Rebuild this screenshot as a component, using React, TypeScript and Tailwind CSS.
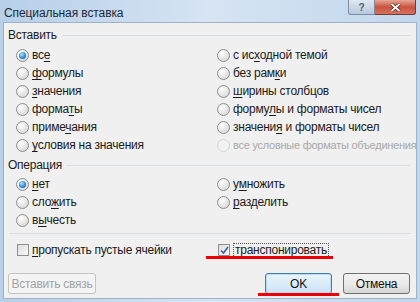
import React from "react";

// accelerator letter is marked with "&"
function Label({ text, disabled }: { text: string; disabled?: boolean }) {
  const i = text.indexOf("&");
  const color = disabled ? "text-[#a8a8a8] text-[11px]" : "text-[#1b1b1b]";
  if (i < 0) return <span className={`${color} whitespace-nowrap`}>{text}</span>;
  return (
    <span className={`${color} whitespace-nowrap`}>
      {text.slice(0, i)}
      <span className="underline underline-offset-[2px] decoration-[1px]">{text[i + 1]}</span>
      {text.slice(i + 2)}
    </span>
  );
}

function Radio({ checked, disabled }: { checked?: boolean; disabled?: boolean }) {
  return (
    <span
      className={`w-[13px] h-[13px] rounded-full border flex items-center justify-center shrink-0 ${
        disabled
          ? "border-[#d4d4d4] bg-[#f2f2f2]"
          : "border-[#8e8f8f] bg-[radial-gradient(circle_at_35%_30%,#ffffff,#e2e2e2_60%,#cfcfcf)]"
      }`}
    >
      {checked && (
        <span className="w-[7px] h-[7px] rounded-full bg-[radial-gradient(circle_at_40%_35%,#b8e6ff,#2f8ad8_55%,#0f4f94)]" />
      )}
    </span>
  );
}

function Check({ checked }: { checked?: boolean }) {
  return (
    <span className="w-[12px] h-[12px] border border-[#8e8f8f] bg-gradient-to-br from-[#dcdcdc] to-[#fbfbfb] flex items-center justify-center shrink-0">
      {checked && (
        <svg width="9" height="9" viewBox="0 0 9 9">
          <path d="M1 4.5 L3.5 7 L8 1" fill="none" stroke="#3a5f9e" strokeWidth="1.6" />
        </svg>
      )}
    </span>
  );
}

function Row({ children }: { children: React.ReactNode }) {
  return <div className="h-[18px] flex items-center gap-[3px]">{children}</div>;
}

function GroupHead({ title }: { title: string }) {
  return (
    <div className="h-[18px] flex items-center pl-[4px] pr-[6px] gap-[5px]">
      <span className="text-[#1b1b1b]">{title}</span>
      <span className="flex-1 h-px bg-[#d8dde3]" />
    </div>
  );
}

const pasteLeft = [
  { t: "вс&е", c: true },
  { t: "&формулы" },
  { t: "&значения" },
  { t: "форма&ты" },
  { t: "приме&чания" },
  { t: "&условия на значения" },
];
const pasteRight = [
  { t: "с ис&ходной темой" },
  { t: "без рам&ки" },
  { t: "&ширины столбцов" },
  { t: "форму&лы и форматы чисел" },
  { t: "значени&я и форматы чисел" },
  { t: "все условные форматы объединения", d: true },
];

export default function App() {
  return (
    <div
      className="w-[420px] h-[302px] bg-gradient-to-r from-[#b7cfe9] via-[#d6e4f3] to-[#c2d6ec] flex flex-col text-[12px] tracking-[-0.25px] relative overflow-hidden"
      style={{ fontFamily: '"Liberation Sans", Arial, sans-serif' }}
    >
      {/* title bar */}
      <div className="h-[22px] flex items-start justify-between pr-[4px]">
        <span className="pl-[4px] pt-[4px] text-[12px] tracking-[-0.1px] text-[#1e2a36]">Специальная вставка</span>
        <div className="flex">
          <span className="w-[27px] h-[15px] rounded-bl-[3px] border border-t-0 border-[#7d8ca0] bg-gradient-to-b from-[#dfe8f2] to-[#b8c9dc] flex items-center justify-center text-[10px] font-bold text-[#4d5f74]">
            ?
          </span>
          <span className="w-[41px] h-[15px] rounded-br-[3px] border border-t-0 border-l-0 border-[#6f3b3b] bg-gradient-to-b from-[#e7a597] via-[#c9523d] to-[#d9725e] flex items-center justify-center">
            <svg width="11" height="9" viewBox="0 0 11 9">
              <path d="M1.5 1 L9.5 8 M9.5 1 L1.5 8" stroke="#4a1f1f" strokeWidth="3.2" />
              <path d="M1.5 1 L9.5 8 M9.5 1 L1.5 8" stroke="#ffffff" strokeWidth="1.8" />
            </svg>
          </span>
        </div>
      </div>

      {/* client area */}
      <div className="mx-[3px] h-[277px] border border-[#9fb1c6] bg-[#f0f0f0] flex flex-col pt-[3px]">
        <GroupHead title="Вставить" />
        <div className="grid grid-cols-[201px_1fr] pl-[12px] mt-[2px]">
          <div className="flex flex-col">
            {pasteLeft.map((r) => (
              <Row key={r.t}>
                <Radio checked={r.c} />
                <Label text={r.t} />
              </Row>
            ))}
          </div>
          <div className="flex flex-col">
            {pasteRight.map((r) => (
              <Row key={r.t}>
                <Radio disabled={r.d} />
                <Label text={r.t} disabled={r.d} />
              </Row>
            ))}
          </div>
        </div>

        <div className="mt-[2px]">
          <GroupHead title="Операция" />
        </div>
        <div className="grid grid-cols-[201px_1fr] pl-[12px] mt-[1px]">
          <div className="flex flex-col">
            <Row>
              <Radio checked />
              <Label text="&нет" />
            </Row>
            <Row>
              <Radio />
              <Label text="сло&жить" />
            </Row>
            <Row>
              <Radio />
              <Label text="в&ычесть" />
            </Row>
          </div>
          <div className="flex flex-col">
            <Row>
              <Radio />
              <Label text="у&множить" />
            </Row>
            <Row>
              <Radio />
              <Label text="&разделить" />
            </Row>
          </div>
        </div>

        <div className="mx-[5px] mt-[4px] h-px bg-[#d8dde3]" />

        <div className="grid grid-cols-[201px_1fr] pl-[13px] mt-[7px]">
          <Row>
            <Check />
            <Label text="&пропускать пустые ячейки" />
          </Row>
          <Row>
            <Check checked />
            <span className="border border-dotted border-[#555] px-px leading-[13px]">
              <Label text="тра&нспонировать" />
            </span>
          </Row>
        </div>

        <div className="flex items-center mt-[14px] pl-[4px] pr-[6px]">
          <span className="w-[88px] h-[21px] rounded-[3px] border border-[#c3c3c3] bg-[#f4f4f4] flex items-center justify-center text-[#a3a3a3]">
            Вставить связь
          </span>
          <span className="flex-1" />
          <span className="w-[67px] h-[21px] rounded-[3px] border border-[#3c7fb1] bg-gradient-to-b from-[#ecf5fc] to-[#c9e3f6] shadow-[inset_0_0_0_1px_#b6dcf6] flex items-center justify-center text-[#111]">
            OK
          </span>
          <span className="w-[67px] h-[21px] ml-[11px] rounded-[3px] border border-[#707070] bg-gradient-to-b from-[#f2f2f2] via-[#ebebeb] to-[#d6d6d6] flex items-center justify-center text-[#111]">
            Отмена
          </span>
        </div>
      </div>

      {/* red annotation underlines */}
      <span className="absolute left-[206px] top-[256px] w-[127px] h-[3px] bg-[#ee0000]" />
      <span className="absolute left-[258px] top-[293px] w-[81px] h-[3px] bg-[#ee0000]" />
    </div>
  );
}
